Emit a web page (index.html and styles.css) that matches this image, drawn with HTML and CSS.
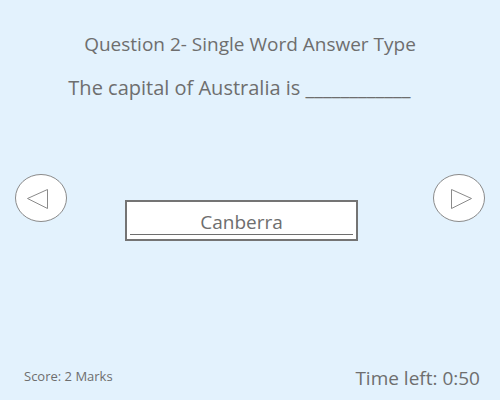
FILE: index.html
```html
<!DOCTYPE html>
<html>
<head>
<meta charset="utf-8">
<link rel="stylesheet" href="styles.css">
</head>
<body>
<div class="screen">
  <h1 class="title">Question 2- Single Word Answer Type</h1>
  <p class="question">The capital of Australia is ____________</p>
  <div class="middle">
    <button class="nav prev" aria-label="Previous">
      <svg width="52" height="48" viewBox="0 0 52 48"><ellipse cx="26" cy="24" rx="25.5" ry="23.5" fill="#fff" stroke="#8a8a8a" stroke-width="1"/><polygon points="12.5,24.5 32.5,15.5 32.5,34.5" fill="none" stroke="#8a8a8a" stroke-width="1"/></svg>
    </button>
    <div class="answer"><span class="answer-text">Canberra</span></div>
    <button class="nav next" aria-label="Next">
      <svg width="52" height="48" viewBox="0 0 52 48"><ellipse cx="26" cy="24" rx="25.5" ry="23.5" fill="#fff" stroke="#8a8a8a" stroke-width="1"/><polygon points="18.5,15.5 38.5,24.5 18.5,34.5" fill="none" stroke="#8a8a8a" stroke-width="1"/></svg>
    </button>
  </div>
  <div class="footer">
    <span class="score">Score: 2 Marks</span>
    <span class="time">Time left: 0:50</span>
  </div>
</div>
</body>
</html>
```
FILE: styles.css
```css
html, body {
  margin: 0;
  padding: 0;
}
body {
  background: #e3f2fd;
  font-family: "Open Sans", "Noto Sans", sans-serif;
  color: #6e6e6e;
}
.screen {
  width: 500px;
  height: 400px;
  display: flex;
  flex-direction: column;
  box-sizing: border-box;
}
.title {
  margin: 31px 0 0;
  font-size: 19px;
  font-weight: 400;
  text-align: center;
  line-height: 26px;
}
.question {
  margin: 17px 0 0 0;
  font-size: 20px;
  text-align: center;
  line-height: 28px;
  padding-right: 21px;
}
.middle {
  display: flex;
  align-items: flex-start;
  padding: 0 0 0 15px;
  margin-top: 72px;
}
.nav {
  width: 52px;
  height: 48px;
  padding: 0;
  border: 0;
  background: none;
  display: block;
  flex: none;
}
.nav svg { display: block; }
.answer {
  margin: 26px 0 0 58px;
  width: 233px;
  height: 41px;
  box-sizing: border-box;
  border: 2px solid #747474;
  background: #fff;
  padding: 3px 3px 0 3px;
  display: flex;
  align-items: flex-start;
  flex: none;
}
.next {
  margin-left: 75px;
}
.answer-text {
  flex: 1;
  border-bottom: 1px solid #6e6e6e;
  text-align: center;
  font-size: 19px;
  line-height: 24px;
  padding-top: 5px;
}
.footer {
  margin-top: auto;
  display: flex;
  justify-content: space-between;
  align-items: flex-end;
  padding: 0 20px 9px 24px;
}
.score {
  font-size: 13px;
  margin-bottom: 6px;
}
.time {
  font-size: 19px;
}
```
